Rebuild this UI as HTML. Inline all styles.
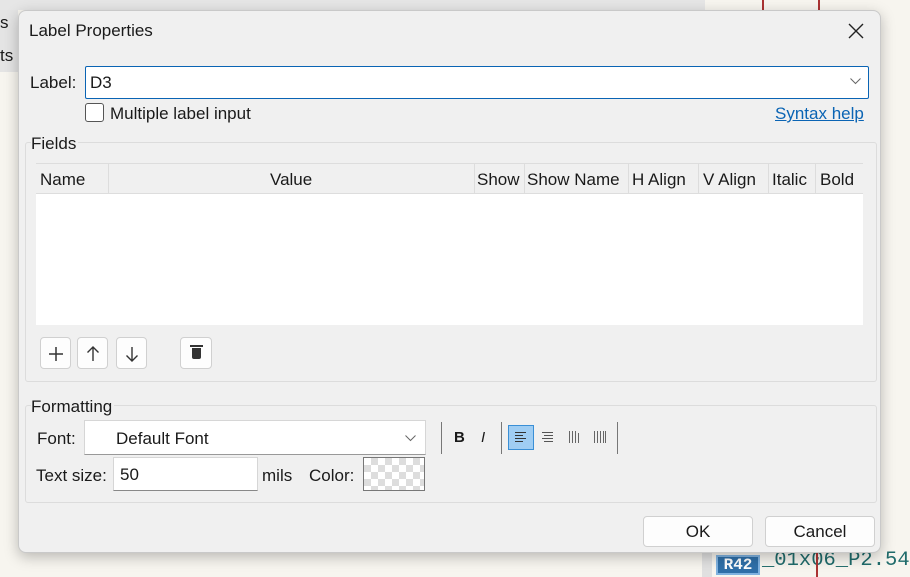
<!DOCTYPE html>
<html><head><style>
*{box-sizing:border-box;margin:0;padding:0}
body{width:910px;height:577px;overflow:hidden;position:relative;background:#f7f5ef;font-family:"Liberation Sans",sans-serif;font-size:17px;color:#1a1a1a}
.abs{position:absolute}
.dlg{left:18px;top:10px;width:863px;height:543px;background:#f0f0f0;border:1px solid #c9c9c9;border-radius:8px;box-shadow:0 4px 14px rgba(0,0,0,.25)}
.btn{background:#fdfdfd;border:1px solid #d0d0d0;border-radius:4px}
.grp{border:1px solid #dcdcdc;border-radius:3px}
</style></head><body>
<div class="abs" style="left:0;top:0;width:705px;height:10px;background:#e6e6e6"></div>
<div class="abs" style="left:0;top:10px;width:18px;height:62px;background:#e4e4e4"></div>
<div class="abs" style="left:0;top:13px;font-size:17px">s</div>
<div class="abs" style="left:0;top:46px;font-size:17px">ts</div>
<div class="abs" style="left:762px;top:0;width:2px;height:10px;background:#a33"></div>
<div class="abs" style="left:818px;top:0;width:2px;height:10px;background:#a33"></div>
<div class="abs" style="left:702px;top:553px;width:10px;height:24px;background:#e0e0e0"></div>
<div class="abs" style="left:716px;top:555px;width:44px;height:20px;background:#2f6fa8;border:2px solid #7fb2e0;color:#fff;font-family:'Liberation Mono',monospace;font-weight:bold;font-size:16px;text-align:center;line-height:17px">R42</div>
<div class="abs" style="left:762px;top:549px;font-family:'Liberation Mono',monospace;font-size:20.5px;color:#1f6b6b">_01x06_P2.54</div>
<div class="abs" style="left:816px;top:553px;width:2px;height:24px;background:#a33"></div>

<div class="abs dlg">
 <div class="abs" style="left:10px;top:10px;font-size:17px">Label Properties</div>
 <svg class="abs" style="left:829px;top:12px" width="16" height="16"><path d="M1 1L15 15M15 1L1 15" stroke="#222" stroke-width="1.4"/></svg>
 <div class="abs" style="left:11px;top:62px">Label:</div>
 <div class="abs" style="left:66px;top:55px;width:784px;height:33px;border:1px solid #0a64b4;border-radius:2px;background:#fff"></div>
 <div class="abs" style="left:71px;top:62px">D3</div>
 <svg class="abs" style="left:831px;top:67px" width="11" height="7"><path d="M0.5 0.5L5.5 5.5L10.5 0.5" stroke="#666" fill="none"/></svg>
 <div class="abs" style="left:66px;top:92px;width:19px;height:19px;border:1px solid #555;border-radius:3px;background:#fff"></div>
 <div class="abs" style="left:91px;top:93px">Multiple label input</div>
 <div class="abs" style="left:756px;top:93px;color:#0a64b4;text-decoration:underline">Syntax help</div>
 <div class="abs grp" style="left:6px;top:131px;width:852px;height:240px"></div>
 <div class="abs" style="left:12px;top:123px;background:#f0f0f0;padding-right:2px">Fields</div>
 <div class="abs" style="left:17px;top:152px;width:827px;height:31px;background:#f0f0f0;border-bottom:1px solid #ddd;border-top:1px solid #ddd"></div>
 <div class="abs" style="left:17px;top:183px;width:827px;height:131px;background:#fff"></div>
 <div class="abs" style="left:21px;top:159px">Name</div>
 <div class="abs" style="left:89px;top:152px;width:1px;height:31px;background:#ddd"></div>
 <div class="abs" style="left:251px;top:159px">Value</div>
 <div class="abs" style="left:455px;top:152px;width:1px;height:31px;background:#ddd"></div>
 <div class="abs" style="left:458px;top:159px">Show</div>
 <div class="abs" style="left:505px;top:152px;width:1px;height:31px;background:#ddd"></div>
 <div class="abs" style="left:508px;top:159px">Show Name</div>
 <div class="abs" style="left:609px;top:152px;width:1px;height:31px;background:#ddd"></div>
 <div class="abs" style="left:613px;top:159px">H Align</div>
 <div class="abs" style="left:679px;top:152px;width:1px;height:31px;background:#ddd"></div>
 <div class="abs" style="left:684px;top:159px">V Align</div>
 <div class="abs" style="left:749px;top:152px;width:1px;height:31px;background:#ddd"></div>
 <div class="abs" style="left:753px;top:159px">Italic</div>
 <div class="abs" style="left:796px;top:152px;width:1px;height:31px;background:#ddd"></div>
 <div class="abs" style="left:801px;top:159px">Bold</div>
 <div class="abs btn" style="left:21px;top:326px;width:31px;height:32px"><svg class="abs" style="left:7px;top:8px" width="16" height="16"><path d="M8 1V15M1 8H15" stroke="#333" stroke-width="1.5"/></svg></div>
 <div class="abs btn" style="left:58px;top:326px;width:31px;height:32px"><svg class="abs" style="left:8px;top:8px" width="14" height="16"><path d="M7 15V1M1.5 6.5L7 1L12.5 6.5" stroke="#333" stroke-width="1.4" fill="none"/></svg></div>
 <div class="abs btn" style="left:97px;top:326px;width:31px;height:32px"><svg class="abs" style="left:8px;top:8px" width="14" height="16"><path d="M7 1V15M1.5 9.5L7 15L12.5 9.5" stroke="#333" stroke-width="1.4" fill="none"/></svg></div>
 <div class="abs btn" style="left:161px;top:326px;width:32px;height:32px"><div class="abs" style="left:11px;top:10px;width:9px;height:11px;background:#333;border-radius:0 0 2px 2px"></div><div class="abs" style="left:9px;top:7px;width:13px;height:2px;background:#333"></div></div>
 <div class="abs grp" style="left:6px;top:394px;width:852px;height:98px"></div>
 <div class="abs" style="left:12px;top:386px;background:#f0f0f0;padding-right:2px">Formatting</div>
 <div class="abs" style="left:18px;top:418px">Font:</div>
 <div class="abs" style="left:65px;top:409px;width:342px;height:35px;border:1px solid #d6d6d6;border-bottom:1px solid #999;background:#fff"></div>
 <div class="abs" style="left:97px;top:418px">Default Font</div>
 <svg class="abs" style="left:386px;top:424px" width="11" height="7"><path d="M0.5 0.5L5.5 5.5L10.5 0.5" stroke="#666" fill="none"/></svg>
 <div class="abs" style="left:422px;top:411px;width:1px;height:32px;background:#777"></div>
 <div class="abs" style="left:435px;top:418px;font-weight:bold;font-size:15px">B</div>
 <div class="abs" style="left:462px;top:418px;font-style:italic;font-size:15px">I</div>
 <div class="abs" style="left:482px;top:411px;width:1px;height:32px;background:#777"></div>
 <div class="abs" style="left:489px;top:414px;width:26px;height:25px;background:#9fcdf3;border:1px solid #3a8fd6"></div>
 <svg class="abs" style="left:495px;top:420px" width="14" height="12"><path d="M1 1.5H12M1 4.5H9M1 7.5H12M1 10.5H9" stroke="#333"/></svg>
 <svg class="abs" style="left:522px;top:420px" width="14" height="12"><path d="M1 1.5H12M3 4.5H12M1 7.5H12M3 10.5H12" stroke="#555"/></svg>
 <svg class="abs" style="left:548px;top:419px" width="14" height="14"><path d="M2.5 1V13M5.5 1V13M8.5 1V13M11.5 3V13" stroke="#666"/></svg>
 <svg class="abs" style="left:574px;top:419px" width="14" height="14"><path d="M1.5 1V13M4.5 1V13M7.5 1V13M10.5 1V13M12.5 1V13" stroke="#666"/></svg>
 <div class="abs" style="left:598px;top:411px;width:1px;height:32px;background:#777"></div>
 <div class="abs" style="left:17px;top:455px">Text size:</div>
 <div class="abs" style="left:94px;top:446px;width:145px;height:34px;background:#fff;border:1px solid #d6d6d6;border-bottom:1px solid #888"></div>
 <div class="abs" style="left:101px;top:454px">50</div>
 <div class="abs" style="left:243px;top:455px">mils</div>
 <div class="abs" style="left:290px;top:455px">Color:</div>
 <div class="abs" style="left:344px;top:446px;width:62px;height:34px;border:1px solid #777;background-color:#fff;background-image:linear-gradient(45deg,#ddd 25%,transparent 25%,transparent 75%,#ddd 75%),linear-gradient(45deg,#ddd 25%,transparent 25%,transparent 75%,#ddd 75%);background-size:14px 14px;background-position:0 0,7px 7px"></div>
 <div class="abs btn" style="left:624px;top:505px;width:110px;height:31px;text-align:center;line-height:29px">OK</div>
 <div class="abs btn" style="left:746px;top:505px;width:110px;height:31px;text-align:center;line-height:29px">Cancel</div>
</div>
</body></html>
